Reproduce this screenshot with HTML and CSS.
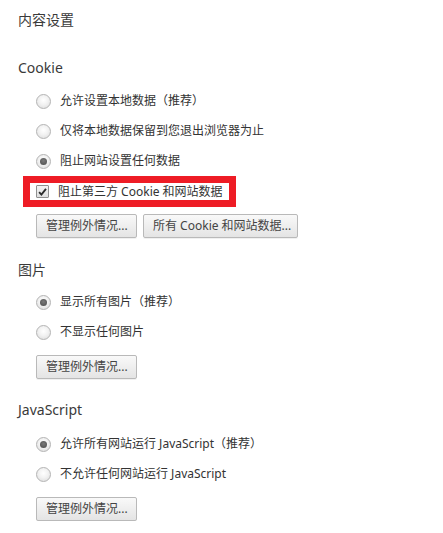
FILE: index.html
```html
<!DOCTYPE html>
<html lang="zh-CN">
<head>
<meta charset="utf-8">
<title>内容设置</title>
<link rel="stylesheet" href="styles.css">
</head>
<body>
<div class="page">
  <div class="title">内容设置</div>

  <div class="section sec-cookie">
    <div class="head">Cookie</div>
    <div class="options opt-cookie">
      <div class="row"><span class="radio"></span><span class="label">允许设置本地数据（推荐）</span></div>
      <div class="row"><span class="radio"></span><span class="label">仅将本地数据保留到您退出浏览器为止</span></div>
      <div class="row"><span class="radio checked"></span><span class="label">阻止网站设置任何数据</span></div>
    </div>
    <div class="highlight">
      <div class="check-row">
        <span class="checkbox"><svg viewBox="0 0 12 12" width="12" height="12"><path d="M2.3 6.2 L4.8 8.9 L9.8 2.6" fill="none" stroke="#2b2b2b" stroke-width="2"/></svg></span>
        <span class="label">阻止第三方 Cookie 和网站数据</span>
      </div>
    </div>
    <div class="buttons">
      <button class="btn btn-a">管理例外情况...</button>
      <button class="btn btn-b">所有 Cookie 和网站数据...</button>
    </div>
  </div>

  <div class="section sec-img">
    <div class="head">图片</div>
    <div class="options opt-img">
      <div class="row"><span class="radio checked"></span><span class="label">显示所有图片（推荐）</span></div>
      <div class="row"><span class="radio"></span><span class="label">不显示任何图片</span></div>
    </div>
    <div class="buttons">
      <button class="btn btn-a">管理例外情况...</button>
    </div>
  </div>

  <div class="section sec-js">
    <div class="head">JavaScript</div>
    <div class="options opt-js">
      <div class="row"><span class="radio checked"></span><span class="label">允许所有网站运行 JavaScript（推荐）</span></div>
      <div class="row"><span class="radio"></span><span class="label">不允许任何网站运行 JavaScript</span></div>
    </div>
    <div class="buttons">
      <button class="btn btn-a">管理例外情况...</button>
    </div>
  </div>
</div>
</body>
</html>
```

FILE: styles.css
```css
html, body {
  margin: 0;
  padding: 0;
  background: #ffffff;
}

body {
  font-family: "Noto Sans", "Noto Sans CJK SC", sans-serif;
  color: #333333;
  font-size: 12px;
}

.page {
  padding: 8px 0 0 18px;
}

.title {
  font-size: 14px;
  height: 24px;
  line-height: 24px;
  color: #3a3a3a;
}

.head {
  font-size: 14px;
  height: 24px;
  line-height: 24px;
  color: #3a3a3a;
}

.sec-cookie { margin-top: 24px; }
.sec-img { margin-top: 20px; }
.sec-js { margin-top: 19px; }

.options { margin-left: 18px; }
.opt-cookie { margin-top: 6px; }
.opt-img { margin-top: 5px; }
.opt-js { margin-top: 7px; }

.row {
  display: flex;
  align-items: center;
  height: 30px;
}

.radio {
  box-sizing: border-box;
  width: 15px;
  height: 15px;
  border-radius: 50%;
  border: 1px solid #b4b4b4;
  background: radial-gradient(circle at 50% 40%, #ffffff 0%, #f2f2f2 45%, #d9d9d9 100%);
  display: flex;
  align-items: center;
  justify-content: center;
  flex: none;
}

.radio.checked::after {
  content: "";
  width: 7px;
  height: 7px;
  border-radius: 50%;
  background: radial-gradient(circle at 50% 40%, #7a7a7a 0%, #4a4a4a 100%);
}

.label {
  margin-left: 9px;
  line-height: 16px;
  color: #333333;
  white-space: nowrap;
}

.highlight {
  margin-left: 5px;
  margin-top: 0;
  width: 193px;
  border: 7px solid #ee1c25;
  background: #ffffff;
  padding-left: 6px;
}

.check-row {
  display: flex;
  align-items: center;
  height: 17px;
}

.checkbox {
  box-sizing: border-box;
  width: 13px;
  height: 13px;
  border: 1px solid #8f8f8f;
  border-radius: 1px;
  background: linear-gradient(#f4f4f4, #dedede);
  display: flex;
  align-items: center;
  justify-content: center;
  flex: none;
}

.checkbox svg { display: block; }

.check-row .label { margin-left: 9px; }

.buttons {
  display: flex;
  gap: 6px;
  margin-left: 18px;
  margin-top: 8px;
}

.sec-cookie .buttons { margin-top: 7px; }

.btn {
  box-sizing: border-box;
  height: 24px;
  padding: 0 9px;
  font-family: "Noto Sans", "Noto Sans CJK SC", sans-serif;
  font-size: 12px;
  color: #444444;
  border: 1px solid #b9b9b9;
  border-radius: 2px;
  background: linear-gradient(#f9f9f9, #e4e4e4);
  box-shadow: 0 1px 0 rgba(0,0,0,0.06);
  line-height: 22px;
  white-space: nowrap;
}

.btn-a { width: 101px; }
.btn-b { width: 155px; }
```
